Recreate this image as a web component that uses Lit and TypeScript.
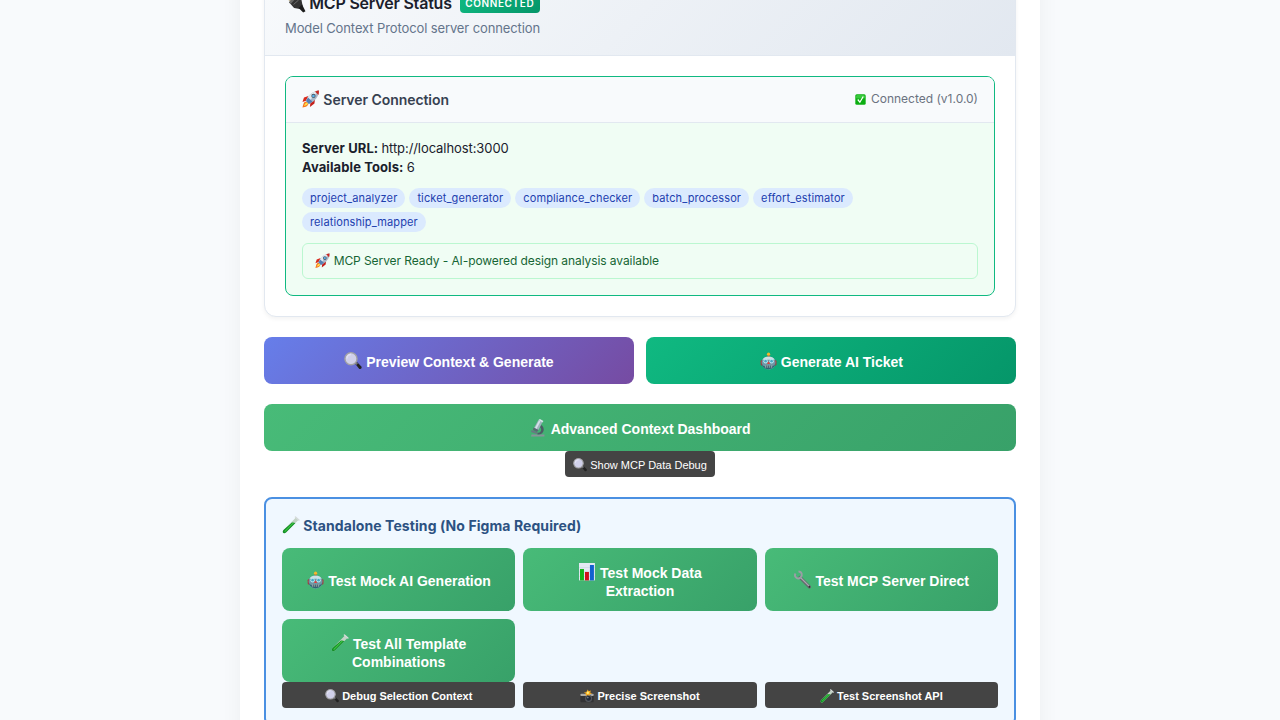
import { LitElement, html, svg, css } from "lit";
import { customElement, property } from "lit/decorators.js";

const glyphs: Record<string, unknown> = {
  plug: svg`
    <path d="M2 10l8 5M12 1l6 6" stroke="#b8a77c" stroke-width="3"/>
    <path d="M7 18L20 5l9 9 2 10-5 6-10-2z" fill="#333"/>
    <path d="M7 18L20 5l2 3L10 21z" fill="#6a6a68"/>
    <path d="M24 28l6-6 6 12-4 2z" fill="#1c1c1c"/>
    <path d="M15 22l9-8" stroke="#777" stroke-width="1.5"/>`,
  rocket: svg`
    <path d="M12 20L1 24l3-9 9-3z" fill="#d9291c"/><path d="M17 24l-1 10 9-7 1-8z" fill="#c41f1a"/>
    <path d="M9 23C3 23 3 29 1 35c7-1 12-3 12-9z" fill="#f7761f"/>
    <path d="M10 25c-3 0-5 4-6 7 4-1 7-2 8-5z" fill="#ffe14a"/>
    <path d="M8 22C12 11 22 2 34 1c0 12-7 21-20 27z" fill="#a9b8c8"/>
    <path d="M8 22C12 11 22 2 34 1L12 25z" fill="#e2e9ef"/>
    <path d="M26 3c3-1 6-2 8-2 0 3 0 6-1 9z" fill="#c92820"/>
    <path d="M12 15l9 8-7 5-6-6z" fill="#5581b4"/>
    <circle cx="23" cy="12" r="4.3" fill="#4d5966"/><circle cx="23" cy="12" r="2.6" fill="#58b4ee"/>`,
  check: svg`
    <rect x="1" y="1" width="34" height="34" rx="5" fill="#0cae12"/>
    <rect x="3" y="3" width="30" height="12" rx="5" fill="#37c83b"/>
    <path d="M9 18l7 9L27 8" fill="none" stroke="#fff" stroke-width="4"/>`,
  magnifier: svg`
    <path d="M22 23l4-3 9 9c2 3-2 7-5 4z" fill="#222"/><path d="M22 23l3-3 3 3-3 3z" fill="#77777c"/>
    <circle cx="14" cy="13.5" r="12.2" fill="#d0d0ea" stroke="#a2a2a4" stroke-width="2.8"/>
    <path d="M6 13a8 8 0 0 1 8-8" fill="none" stroke="#e0e0f2" stroke-width="3"/>`,
  robot: svg`<g transform="translate(2.500 1) scale(.93 .97)">
    <rect x="16" y="4" width="4" height="8" fill="#a33a2c"/><circle cx="18" cy="3.5" r="3.5" fill="#f4b62d"/>
    <rect x="1" y="16" width="6" height="11" rx="2" fill="#b03238"/><rect x="29" y="16" width="6" height="11" rx="2" fill="#b03238"/>
    <path d="M3 20C3 5 33 5 33 20c0 20-30 20-30 0z" fill="#6f97a5"/>
    <path d="M5 15C9 6 27 6 31 15z" fill="#c8e1e6"/>
    <path d="M3 22c2 17 28 17 30 0-1 4-4 6-7 6H10c-3 0-6-2-7-6z" fill="#2f6475"/>
    <circle cx="11.5" cy="18" r="4.6" fill="#c2edf5"/><circle cx="24.5" cy="18" r="4.6" fill="#c2edf5"/>
    <circle cx="11.5" cy="18" r="2.8" fill="#45a9c4"/><circle cx="24.5" cy="18" r="2.8" fill="#45a9c4"/>
    <path d="M18 18l3.5 6h-7z" fill="#e23f3e"/><rect x="10" y="26.5" width="16" height="5" rx="1" fill="#8ba2a8"/>
    <path d="M14 27v5m4-5v5m4-5v5" stroke="#31505c" stroke-width="1.6"/></g>`,
  microscope: svg`
    <path d="M5 31h26v4H4z" fill="#87939a"/><path d="M17 31c14 1 16-13 8-19l-3 4c5 5 2 12-5 12z" fill="#4c5c65"/>
    <path d="M5 22l13 5-2 3-12-4z" fill="#687982"/>
    <path d="M10 18l9-16 8 4-8 16z" fill="#9fb2bd"/><path d="M19 2l3-2 7 4-2 3z" fill="#d7e4ea"/>
    <path d="M12 18L20 3l3 2-8 15z" fill="#d3e1e8"/><path d="M9 17l10 5-3 4-8-4z" fill="#596973"/>`,
  tube: svg`
    <path d="M28 3l5 5L8 33c-4 4-9 0-5-5z" fill="#c3d3c6"/>
    <path d="M20 13l7 1L8 33c-4 4-9 0-5-5z" fill="#128f26"/>
    <path d="M22 13l2 1L6 32l-1.5-1.5z" fill="#3fc943"/>
    <path d="M27 2l7 6" stroke="#d5dbda" stroke-width="3" stroke-linecap="round"/>`,
  chart: svg`
    <rect x="2" y="0" width="32" height="35" fill="#e3e9f3"/>
    <path d="M2 9h32M2 18h32M2 27h32" stroke="#c7d0e2"/>
    <rect x="4" y="12" width="8" height="23" fill="#15b51c"/><rect x="14" y="18" width="8" height="17" fill="#d0121b"/>
    <rect x="24" y="4" width="8" height="31" fill="#1260cf"/>`,
  wrench: svg`
    <path d="M12 13L31 32" stroke="#66696f" stroke-width="6.5" stroke-linecap="round"/>
    <path d="M12 12L30 30" stroke="#a8abb1" stroke-width="2.4"/>
    <path d="M3 5c-4 7 5 13 10 8 5-4 3-12-4-12" fill="none" stroke="#9a9ea5" stroke-width="3.8"/>
    <circle cx="31" cy="32" r="1.6" fill="#2a2a2a"/>`,
  camera: svg`
    <rect x="1" y="12" width="34" height="22" rx="3" fill="#323234"/><rect x="1" y="12" width="34" height="6" rx="2" fill="#aaa9a5"/>
    <path d="M10 13l3-6h12l3 6z" fill="#555"/>
    <circle cx="22" cy="24" r="9" fill="#55585d"/><circle cx="22" cy="24" r="6" fill="#202837"/><circle cx="20" cy="22" r="2" fill="#7b8797"/>
    <path d="M20 1l2 5 6-2-2 5 5 3-6 1-1 5-4-3-5 3v-6l-5-3 6-1z" fill="#f7a91c"/><circle cx="20" cy="9.5" r="3" fill="#fff07b"/>`,
};

@customElement("emoji-icon")
class EmojiIcon extends LitElement {
  @property() name = "";
  static styles = css`
    :host { display: inline-block; width: 1.28em; height: 1.28em; margin: -0.2em 0; vertical-align: -0.04em; line-height: 0; }
    svg { display: block; width: 100%; height: 100%; overflow: visible; }
  `;
  render() {
    return html`<svg viewBox="0 0 36 36" aria-hidden="true">${glyphs[this.name]}</svg>`;
  }
}

const icon = (name: string) => html`<emoji-icon name=${name}></emoji-icon>`;

@customElement("app-root")
class AppRoot extends LitElement {
  static styles = css`
    :host { display: block; height: 720px; overflow: hidden; background: #f8fafc; font-family: Inter, sans-serif; color: #1a202c; }
    * { box-sizing: border-box; }
    .container { width: 800px; height: 1000px; margin: -54px auto 0; padding: 24px; background: #fff; box-shadow: 0 0 20px rgba(0, 0, 0, 0.05); }
    .card { border: 1px solid #e2e8f0; border-radius: 12px; overflow: hidden; box-shadow: 0 2px 4px rgba(0, 0, 0, 0.05); background: #fff; height: 347px; }
    .card-head { height: 85px; padding: 19px 20px; background: linear-gradient(135deg, #f8fafc 0%, #e2e8f0 100%); border-bottom: 1px solid #e2e8f0; }
    .title { display: flex; align-items: center; gap: 8px; height: 26px; font-size: 16px; font-weight: 600; line-height: 26px; letter-spacing: -0.2px; }
    .badge { height: 19px; line-height: 19px; padding: 0 5.5px; border-radius: 4px; background: linear-gradient(135deg, #10b981, #059669); color: #fff; font-size: 10px; letter-spacing: 0.6px; }
    .subtitle { margin-top: 2px; font-size: 13px; line-height: 20px; letter-spacing: -0.11px; color: #64748b; }
    .card-body { padding: 20px; }
    .server { height: 220px; border: 1px solid #10b981; border-radius: 8px; overflow: hidden; background: #f0fdf4; }
    .server-head { height: 46px; padding: 0 16px; display: flex; justify-content: space-between; align-items: center; background: #f8fafc; border-bottom: 1px solid #e2e8f0; }
    .server-name { font-size: 14px; font-weight: 600; color: #374151; line-height: 20px; padding-top: 1px; letter-spacing: -0.06px; }
    .state { display: flex; align-items: center; gap: 5px; font-size: 12px; color: #6b7280; line-height: 18px; padding-bottom: 1px; }
    .state emoji-icon { width: 11px; height: 11px; margin: 0; }
    .server-body { padding: 16px; }
    .info { font-size: 13px; line-height: 19px; letter-spacing: -0.08px; }
    .info b { font-weight: 700; letter-spacing: 0.1px; }
    .chips { display: flex; flex-wrap: wrap; gap: 4px; margin-top: 11px; padding-right: 90px; }
    .chip { height: 20px; line-height: 20px; padding: 0 8px; border-radius: 12px; background: #dbeafe; color: #1e40af; font-size: 11px; letter-spacing: 0.12px; }
    .ready { margin-top: 11px; height: 36px; line-height: 34px; padding: 0 12px; border: 1px solid #bbf7d0; border-radius: 6px; font-size: 12px; letter-spacing: -0.08px; color: #166534; }
    .actions { display: grid; grid-template-columns: 1fr 1fr; gap: 20px 12px; margin-top: 20px; }
    button { border: 0; margin: 0; font-family: "Liberation Sans", Arial, sans-serif; color: #fff; }
    .btn { display: flex; align-items: center; justify-content: center; min-height: 47px; padding: 3px 20px 0; border-radius: 8px; font-size: 14px; line-height: 18px; font-weight: 700; text-align: center; }
    .violet { background: linear-gradient(135deg, #667eea 0%, #764ba2 100%); }
    .emerald { background: linear-gradient(135deg, #10b981 0%, #059669 100%); }
    .green { background: linear-gradient(135deg, #48bb78 0%, #38a169 100%); }
    .wide { grid-column: 1 / -1; }
    .debug { display: block; height: 26px; padding: 2px 8px 0; border-radius: 4px; background: #444; font-size: 11px; line-height: 14px; white-space: nowrap; }
    .center { margin: 0 auto; width: 150px; }
    .testing { margin-top: 20px; padding: 16px; border: 2px solid #4a90e2; border-radius: 8px; background: #f0f8ff; height: 229px; }
    .testing-title { font-size: 14px; line-height: 22px; height: 33px; font-weight: 700; letter-spacing: 0.08px; color: #2c5282; }
    .grid { display: grid; grid-template-columns: repeat(3, 1fr); gap: 8px; }
    .grid .btn { height: 63px; }
    .grid .two-line { padding-top: 5px; }
    .grid .debug { font-weight: 700; }
  `;

  render() {
    const tools = ["project_analyzer", "ticket_generator", "compliance_checker", "batch_processor", "effort_estimator", "relationship_mapper"];
    const tests = [
      ["robot", "Test Mock AI Generation", ""],
      ["chart", "Test Mock Data Extraction", "two-line"],
      ["wrench", "Test MCP Server Direct", ""],
      ["tube", "Test All Template Combinations", "two-line"],
    ];
    const debug = [
      ["magnifier", "Debug Selection Context"],
      ["camera", "Precise Screenshot"],
      ["tube", "Test Screenshot API"],
    ];
    return html`
      <div class="container">
        <section class="card">
          <div class="card-head">
            <div class="title"><span>${icon("plug")} MCP Server Status</span><span class="badge">CONNECTED</span></div>
            <div class="subtitle">Model Context Protocol server connection</div>
          </div>
          <div class="card-body">
            <div class="server">
              <div class="server-head">
                <div class="server-name">${icon("rocket")} Server Connection</div>
                <div class="state">${icon("check")}<span>Connected (v1.0.0)</span></div>
              </div>
              <div class="server-body">
                <div class="info"><b>Server URL: </b>http://localhost:3000</div>
                <div class="info"><b>Available Tools: </b>6</div>
                <div class="chips">${tools.map((t) => html`<span class="chip">${t}</span>`)}</div>
                <div class="ready">${icon("rocket")} MCP Server Ready - AI-powered design analysis available</div>
              </div>
            </div>
          </div>
        </section>
        <div class="actions">
          <button class="btn violet"><span>${icon("magnifier")} Preview Context &amp; Generate</span></button>
          <button class="btn emerald"><span>${icon("robot")} Generate AI Ticket</span></button>
          <button class="btn green wide"><span>${icon("microscope")} Advanced Context Dashboard</span></button>
        </div>
        <button class="debug center">${icon("magnifier")} Show MCP Data Debug</button>
        <section class="testing">
          <div class="testing-title">${icon("tube")} Standalone Testing (No Figma Required)</div>
          <div class="grid">${tests.map(([i, t, c]) => html`<button class="btn green ${c}"><span>${icon(i)} ${t}</span></button>`)}</div>
          <div class="grid">${debug.map(([i, t]) => html`<button class="debug">${icon(i)} ${t}</button>`)}</div>
        </section>
      </div>
    `;
  }
}
